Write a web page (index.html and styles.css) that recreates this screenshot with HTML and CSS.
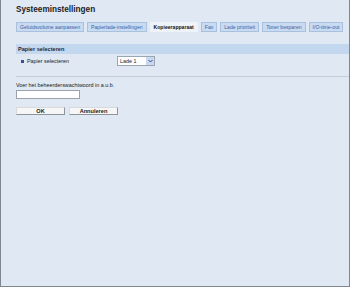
FILE: index.html
```html
<!DOCTYPE html>
<html>
<head>
<meta charset="utf-8">
<link rel="stylesheet" href="styles.css">
</head>
<body>
<div class="frame">
  <h1 class="title">Systeeminstellingen</h1>
  <nav class="tabs">
    <span class="tab">Geluidsvolume aanpassen</span>
    <span class="tab">Papierlade-instellingen</span>
    <span class="tab active">Kopieerapparaat</span>
    <span class="tab">Fax</span>
    <span class="tab">Lade prioriteit</span>
    <span class="tab">Toner besparen</span>
    <span class="tab">I/O-time-out</span>
  </nav>
  <div class="band">Papier selecteren</div>
  <div class="row">
    <span class="bullet"></span>
    <span class="label">Papier selecteren</span>
    <span class="select"><span class="sel-text">Lade 1</span><span class="sel-arrow"><svg width="5" height="4" viewBox="0 0 5 4"><path d="M0.5 1 L2.5 3 L4.5 1" fill="none" stroke="#2a4a88" stroke-width="1"/></svg></span></span>
  </div>
  <div class="divider"></div>
  <div class="pw">
    <div class="pw-label">Voer het beheerderswachtwoord in a.u.b.</div>
    <div class="input"></div>
  </div>
  <div class="buttons">
    <span class="btn">OK</span>
    <span class="btn">Annuleren</span>
  </div>
</div>
</body>
</html>
```
FILE: styles.css
```css
html, body {
  margin: 0;
  padding: 0;
}
body {
  width: 350px;
  height: 287px;
  overflow: hidden;
  font-family: "Liberation Sans", Arial, sans-serif;
  background: #dfe8f3;
}
.frame {
  box-sizing: border-box;
  width: 350px;
  height: 287px;
  border-left: 1px solid #7f868f;
  border-right: 1px solid #7f868f;
  border-bottom: 1px solid #7f868f;
  background: #dfe8f3;
  padding-left: 15px;
  display: flex;
  flex-direction: column;
}
.title {
  margin: 4px 0 0 0;
  font-size: 8.2px;
  line-height: 11px;
  font-weight: bold;
  color: #222;
}
.tabs {
  display: flex;
  gap: 3px;
  margin-top: 7px;
}
.tab {
  box-sizing: border-box;
  height: 10px;
  padding: 0 3px;
  border: 1px solid #a9c0de;
  background: #c9dbf1;
  color: #3b5ea6;
  font-size: 5.1px;
  line-height: 8px;
  white-space: nowrap;
}
.tab.active {
  background: #eef3f9;
  border-color: #eef3f9;
  color: #111;
  font-weight: bold;
}
.band {
  margin-top: 12px;
  height: 10px;
  background: #c3d7ef;
  font-size: 5.6px;
  line-height: 10px;
  font-weight: bold;
  color: #1f2a3a;
  padding-left: 2px;
}
.row {
  display: flex;
  align-items: center;
  height: 12px;
  margin-top: 1px;
  padding-left: 5px;
}
.bullet {
  width: 3px;
  height: 3px;
  background: #3a4f9a;
  margin-right: 3px;
}
.label {
  font-size: 5.4px;
  color: #222;
  width: 90px;
}
.select {
  box-sizing: border-box;
  width: 38px;
  height: 10px;
  border: 1px solid #9aa6b4;
  background: #fff;
  display: flex;
  align-items: center;
  justify-content: space-between;
}
.sel-text {
  font-size: 5.4px;
  color: #222;
  padding-left: 2px;
}
.sel-arrow {
  width: 8px;
  height: 8px;
  background: #c9d8ee;
  display: flex;
  align-items: center;
  justify-content: center;
}
.divider {
  margin-top: 9px;
  height: 1px;
  background: #c4cdd9;
}
.pw {
  margin-top: 5px;
}
.pw-label {
  font-size: 5.4px;
  line-height: 6px;
  color: #222;
}
.input {
  box-sizing: border-box;
  margin-top: 2px;
  width: 64px;
  height: 9px;
  border: 1px solid #9aa3ad;
  background: #fff;
}
.buttons {
  display: flex;
  gap: 4px;
  margin-top: 8px;
}
.btn {
  box-sizing: border-box;
  width: 49px;
  height: 8px;
  border: 1px solid #8f949a;
  border-top-color: #d8dadd;
  border-left-color: #d8dadd;
  background: #f6f6f6;
  font-size: 5.6px;
  line-height: 6px;
  text-align: center;
  font-weight: bold;
  color: #222;
}
```
